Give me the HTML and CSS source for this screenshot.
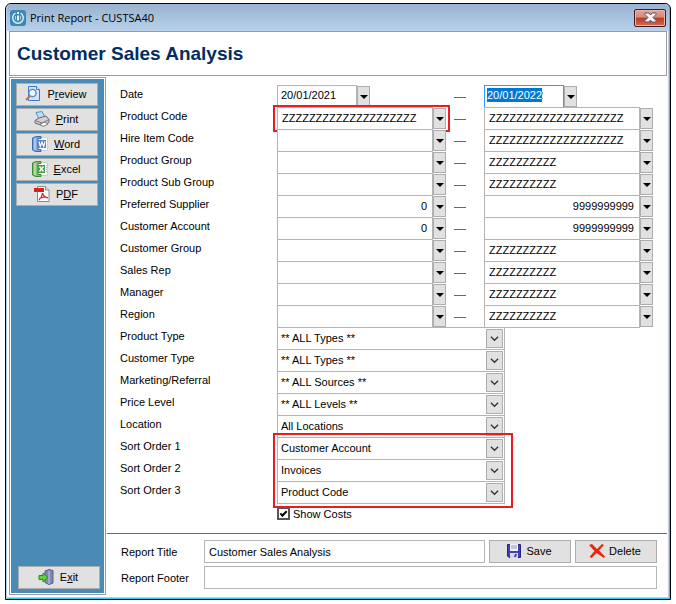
FILE: index.html
```
<!DOCTYPE html>
<html lang="en">
<head>
  <meta charset="UTF-8">
  <meta name="viewport" content="width=device-width, initial-scale=1.0">
  <title>Print Report - CUSTSA40</title>
  <link rel="stylesheet" href="styles.css">
</head>
<body>
  <div class="window">
    <header class="titlebar">
      <svg class="app-icon" viewBox="0 0 16 16">
        <rect width="16" height="16" rx="3" fill="#3f88b5"/>
        <path d="M5.500 3.200a5.300 5.300 0 1 0 5 0" fill="none" stroke="#d9ecf6" stroke-width="1.500"/>
        <path d="M8 2v2M8 5.500v5" fill="none" stroke="#fff" stroke-width="1.800"/>
        <path d="M5.500 6v3.500M10.500 6v3.500" fill="none" stroke="#a9cfe4" stroke-width="1"/>
      </svg>
      <span class="caption">Print Report - CUSTSA40</span>
      <button class="close" aria-label="Close">
        <svg viewBox="0 0 13 11" width="13" height="11">
          <path d="M1 1h4l1.500 2L8 1h4v1.500L9 5.500l3 3V10H8L6.500 8 5 10H1V8.500l3-3-3-3z" fill="#f4f4f6" stroke="#545c6c"/>
        </svg>
      </button>
    </header>

    <div class="heading"><h1>Customer Sales Analysis</h1></div>

    <div class="main">
      <div class="sidebar">
        <nav class="actions">
          <button class="btn">
            <svg viewBox="0 0 16 16">
              <path d="M3.500 .5h8l3 3v11h-11z" fill="#cfe3fb" stroke="#3f78cc"/>
              <path d="M11.500 .5v3h3" fill="#fff" stroke="#3f78cc"/>
              <circle cx="7.500" cy="7" r="3.600" fill="#eaf9ff" stroke="#5d83b5" stroke-width="1.300"/>
              <path d="M5 10L1 14" stroke="#b07a58" stroke-width="2.200"/>
            </svg>
            <span>P<u>r</u>eview</span>
          </button>
          <button class="btn">
            <svg viewBox="0 0 16 16">
              <path d="M2 1.500l6-1 3 6-6 2z" fill="#bfe0fa" stroke="#4f8fd0"/>
              <path d="M1 9.500l4-2.500 7-2 3 3.500v3l-7 3-7-2.500z" fill="#d2d2d6" stroke="#66666c"/>
              <path d="M1 9.500l7 2.500 7-3.500" fill="none" stroke="#77777d"/>
              <path d="M6 13l5-2 3 2-5 2.500z" fill="#fff" stroke="#77777d"/>
            </svg>
            <span><u>P</u>rint</span>
          </button>
          <button class="btn">
            <svg viewBox="0 0 16 16">
              <path d="M5 1.500h10.500v13H5z" fill="#fff" stroke="#c3d0e6"/>
              <path d="M.5 2Q2.500 .5 6 .5h3v2H6v11h3v2H4Q2 15 .5 14z" fill="#7fa6dd" stroke="#3c69ae"/>
              <path d="M3 2v12" stroke="#d3e3f8"/>
              <path d="M6 4h8v8H6z" fill="#5580c4"/>
              <path d="M7 5.500l1.300 5L10 6l1.700 4.500L13 5.500" fill="none" stroke="#fff" stroke-width="1.200"/>
            </svg>
            <span><u>W</u>ord</span>
          </button>
          <button class="btn">
            <svg viewBox="0 0 16 16">
              <path d="M5 1.500h10.500v13H5z" fill="#fff" stroke="#bcd9b8"/>
              <path d="M.5 2Q2.500 .5 6 .5h3v2H6v11h3v2H4Q2 15 .5 14z" fill="#86c06f" stroke="#3d8b3a"/>
              <path d="M3 2v12" stroke="#d9f0cf"/>
              <path d="M6 4h7v8H6z" fill="#4b9a47"/>
              <path d="M7.500 5.500l4 5M11.500 5.500l-4 5" stroke="#fff" stroke-width="1.500"/>
              <path d="M14.500 4v8" stroke="#8cc385" stroke-dasharray="1 1"/>
            </svg>
            <span><u>E</u>xcel</span>
          </button>
          <button class="btn">
            <svg viewBox="0 0 16 16">
              <path d="M3.500 .5h8l3.500 3.500v11.500H3.500z" fill="#fff" stroke="#8a8a8a"/>
              <path d="M11.500 .5v3.500H15" fill="#e6e6e6" stroke="#8a8a8a"/>
              <path d="M0 2h10v4H0z" fill="#d8201c"/>
              <path d="M5 14q3-3 3.500-7M8.500 7q1 4 5.500 5M5.500 12.500Q9 10.500 14 11.500" fill="none" stroke="#e02020" stroke-width="1.200"/>
            </svg>
            <span>P<u>D</u>F</span>
          </button>
        </nav>
        <div class="exit">
          <button class="btn">
            <svg viewBox="0 0 16 16">
              <path d="M7 2l4-1.500 4 1V14l-4 1.500-4-2z" fill="#8387b5" stroke="#5a5d8c"/>
              <path d="M11 1.500v13.500" stroke="#c4c7e4"/>
              <path d="M1 6.500h4V4l5 4.500-5 4.500v-2.500H1z" fill="#5fd43a" stroke="#258a14"/>
            </svg>
            <span>E<u>x</u>it</span>
          </button>
        </div>
      </div>

      <form class="content">
        <div class="criteria">
          <div class="row">
            <label for="date-from">Date</label>
            <div class="picker date"><input id="date-from" type="text" value="20/01/2021"><button type="button" aria-label="Choose"></button></div>
            <span class="dash"></span>
            <div class="picker date focused"><input type="text" value="20/01/2022" aria-label="Date to"><span class="selected">20/01/2022</span><button type="button" aria-label="Choose"></button></div>
          </div>
          <div class="row">
            <label for="code-from">Product Code</label>
            <div class="picker wide-pad marked"><input id="code-from" type="text" value="ZZZZZZZZZZZZZZZZZZZZ"><button type="button" aria-label="Choose"></button></div>
            <span class="dash"></span>
            <div class="picker wide-pad"><input type="text" value="ZZZZZZZZZZZZZZZZZZZZ" aria-label="Product Code to"><button type="button" aria-label="Choose"></button></div>
          </div>
          <div class="row">
            <label for="hire-from">Hire Item Code</label>
            <div class="picker"><input id="hire-from" type="text"><button type="button" aria-label="Choose"></button></div>
            <span class="dash"></span>
            <div class="picker wide-pad"><input type="text" value="ZZZZZZZZZZZZZZZZZZZZ" aria-label="Hire Item Code to"><button type="button" aria-label="Choose"></button></div>
          </div>
          <div class="row">
            <label for="group-from">Product Group</label>
            <div class="picker"><input id="group-from" type="text"><button type="button" aria-label="Choose"></button></div>
            <span class="dash"></span>
            <div class="picker wide-pad"><input type="text" value="ZZZZZZZZZZ" aria-label="Product Group to"><button type="button" aria-label="Choose"></button></div>
          </div>
          <div class="row">
            <label for="sub-from">Product Sub Group</label>
            <div class="picker"><input id="sub-from" type="text"><button type="button" aria-label="Choose"></button></div>
            <span class="dash"></span>
            <div class="picker wide-pad"><input type="text" value="ZZZZZZZZZZ" aria-label="Product Sub Group to"><button type="button" aria-label="Choose"></button></div>
          </div>
          <div class="row">
            <label for="supplier-from">Preferred Supplier</label>
            <div class="picker number"><input id="supplier-from" type="text" value="0"><button type="button" aria-label="Choose"></button></div>
            <span class="dash"></span>
            <div class="picker number"><input type="text" value="9999999999" aria-label="Preferred Supplier to"><button type="button" aria-label="Choose"></button></div>
          </div>
          <div class="row">
            <label for="account-from">Customer Account</label>
            <div class="picker number"><input id="account-from" type="text" value="0"><button type="button" aria-label="Choose"></button></div>
            <span class="dash"></span>
            <div class="picker number"><input type="text" value="9999999999" aria-label="Customer Account to"><button type="button" aria-label="Choose"></button></div>
          </div>
          <div class="row">
            <label for="custgroup-from">Customer Group</label>
            <div class="picker"><input id="custgroup-from" type="text"><button type="button" aria-label="Choose"></button></div>
            <span class="dash"></span>
            <div class="picker wide-pad"><input type="text" value="ZZZZZZZZZZ" aria-label="Customer Group to"><button type="button" aria-label="Choose"></button></div>
          </div>
          <div class="row">
            <label for="rep-from">Sales Rep</label>
            <div class="picker"><input id="rep-from" type="text"><button type="button" aria-label="Choose"></button></div>
            <span class="dash"></span>
            <div class="picker wide-pad"><input type="text" value="ZZZZZZZZZZ" aria-label="Sales Rep to"><button type="button" aria-label="Choose"></button></div>
          </div>
          <div class="row">
            <label for="manager-from">Manager</label>
            <div class="picker"><input id="manager-from" type="text"><button type="button" aria-label="Choose"></button></div>
            <span class="dash"></span>
            <div class="picker wide-pad"><input type="text" value="ZZZZZZZZZZ" aria-label="Manager to"><button type="button" aria-label="Choose"></button></div>
          </div>
          <div class="row">
            <label for="region-from">Region</label>
            <div class="picker"><input id="region-from" type="text"><button type="button" aria-label="Choose"></button></div>
            <span class="dash"></span>
            <div class="picker wide-pad"><input type="text" value="ZZZZZZZZZZ" aria-label="Region to"><button type="button" aria-label="Choose"></button></div>
          </div>

          <div class="row">
            <label for="product-type">Product Type</label>
            <div class="combo"><select id="product-type"><option>** ALL Types **</option></select><svg viewBox="0 0 10 6"><path d="M1 1l4 4 4-4"/></svg></div>
          </div>
          <div class="row">
            <label for="customer-type">Customer Type</label>
            <div class="combo"><select id="customer-type"><option>** ALL Types **</option></select><svg viewBox="0 0 10 6"><path d="M1 1l4 4 4-4"/></svg></div>
          </div>
          <div class="row">
            <label for="marketing">Marketing/Referral</label>
            <div class="combo"><select id="marketing"><option>** ALL Sources **</option></select><svg viewBox="0 0 10 6"><path d="M1 1l4 4 4-4"/></svg></div>
          </div>
          <div class="row">
            <label for="price-level">Price Level</label>
            <div class="combo"><select id="price-level"><option>** ALL Levels **</option></select><svg viewBox="0 0 10 6"><path d="M1 1l4 4 4-4"/></svg></div>
          </div>
          <div class="row">
            <label for="location">Location</label>
            <div class="combo"><select id="location"><option>All Locations</option></select><svg viewBox="0 0 10 6"><path d="M1 1l4 4 4-4"/></svg></div>
          </div>
          <div class="sorting">
            <div class="row">
              <label for="sort-1">Sort Order 1</label>
              <div class="combo"><select id="sort-1"><option>Customer Account</option></select><svg viewBox="0 0 10 6"><path d="M1 1l4 4 4-4"/></svg></div>
            </div>
            <div class="row">
              <label for="sort-2">Sort Order 2</label>
              <div class="combo"><select id="sort-2"><option>Invoices</option></select><svg viewBox="0 0 10 6"><path d="M1 1l4 4 4-4"/></svg></div>
            </div>
            <div class="row">
              <label for="sort-3">Sort Order 3</label>
              <div class="combo"><select id="sort-3"><option>Product Code</option></select><svg viewBox="0 0 10 6"><path d="M1 1l4 4 4-4"/></svg></div>
            </div>
          </div>
          <div class="check-row">
            <input type="checkbox" id="show-costs" checked>
            <label for="show-costs">Show Costs</label>
          </div>
        </div>

        <div class="report">
          <div class="report-row">
            <label for="report-title">Report Title</label>
            <input id="report-title" type="text" value="Customer Sales Analysis">
            <button type="button" class="btn">
              <svg viewBox="0 0 16 16">
                <path d="M1.500 1.500h13v13H3l-1.500-1.500z" fill="#3f3fae" stroke="#26267c"/>
                <path d="M4 1h8v7H4z" fill="#f2f2fa"/>
                <path d="M5 3h6M5 5h6" stroke="#9a9ab8"/>
                <path d="M4 10h8v5H4z" fill="#d5d5e2"/>
                <path d="M9 11h2l-1 3H8z" fill="#3f3fae"/>
              </svg>
              <span>Save</span>
            </button>
            <button type="button" class="btn">
              <svg viewBox="0 0 16 16">
                <path d="M0 2l3-1 5 5 5-5 2 1-5 5.500 6 6-1 1.500-7.500-5L2.500 15 .5 14 5.500 8z" fill="#e8260c"/>
              </svg>
              <span>Delete</span>
            </button>
          </div>
          <div class="report-row">
            <label for="report-footer">Report Footer</label>
            <input id="report-footer" type="text">
          </div>
        </div>
      </form>
    </div>
  </div>
</body>
</html>
```

FILE: styles.css
```
* {
  box-sizing: border-box;
}

body {
  margin: 0;
  padding: 3px 5px 4px;
  min-height: 100vh;
  display: flex;
  background: #fff;
  font-family: "Liberation Sans", Arial, sans-serif;
  font-size: 11px;
  color: #000;
}

input,
select,
button {
  font: inherit;
  color: inherit;
  margin: 0;
  border-radius: 0;
}

.window {
  flex: 1;
  display: flex;
  flex-direction: column;
  border: 1px solid #000;
  border-radius: 6px 6px 0 0;
  box-shadow: inset 1px 0 #b9d1ea, inset -1px -1px #35c5e6, inset -2px -2px #b9d1ea;
  padding: 0 3px 4px;
}

.titlebar {
  display: flex;
  align-items: center;
  height: 27px;
  margin: 0 -2px;
  padding: 0 3px;
  border-radius: 5px 5px 0 0;
  background: linear-gradient(#98b3d0, #b9d1ea);
}

.app-icon {
  width: 16px;
  height: 16px;
}

.caption {
  flex: 1;
  margin-left: 4px;
  font-family: "Open Sans", "Noto Sans", sans-serif;
  font-size: 11px;
}

.close {
  display: flex;
  align-items: center;
  justify-content: center;
  width: 32px;
  height: 18px;
  padding: 0;
  border: 1px solid #431a20;
  border-radius: 2px;
  background: linear-gradient(#e3a79b, #d88877 45%, #bb3a22 50%, #d26b54);
  box-shadow: inset 0 0 0 1px #e8b5aa;
}

.heading {
  border: 1px solid #9a9a9e;
  padding: 0 7px;
}

.heading h1 {
  margin: 0;
  font-size: 19px;
  line-height: 43px;
  color: #002d62;
}

.main {
  flex: 1;
  display: flex;
  gap: 1px;
  margin-top: 1px;
}

.sidebar {
  display: flex;
  flex-direction: column;
  justify-content: space-between;
  width: 97px;
  border: 1px solid #9a9a9e;
  box-shadow: inset 0 0 0 1px #fff;
  padding: 5px 6px;
  background: #4a8bb5;
}

.actions {
  display: flex;
  flex-direction: column;
  gap: 2px;
}

.exit {
  padding-left: 2px;
}

.btn {
  display: flex;
  align-items: center;
  justify-content: center;
  gap: 6px;
  width: 82px;
  height: 23px;
  padding: 0 2px 1px 0;
  border: 1px solid #adadad;
  background: #e1e1e1;
}

.btn svg {
  width: 16px;
  height: 16px;
}

.content {
  flex: 1;
  display: flex;
  flex-direction: column;
  justify-content: space-between;
}

.criteria {
  padding: 8px 13px 0;
}

.row {
  display: flex;
  height: 22px;
}

.row label {
  width: 157px;
  line-height: 19px;
}

.picker {
  position: relative;
  display: flex;
  align-items: flex-end;
  width: 169px;
  height: 23px;
}

.picker input,
.report-row input {
  flex: 1;
  min-width: 0;
  height: 23px;
  border: 1px solid #b4b4b4;
  padding: 0 3px 1px;
  background: #fff;
}

.picker button {
  display: flex;
  align-items: center;
  justify-content: center;
  width: 13px;
  height: 21px;
  margin-bottom: 1px;
  padding: 0;
  border: 1px solid #adadad;
  background: #e1e1e1;
}

.picker button::before {
  content: "";
  border: 4px solid transparent;
  border-top-color: #000;
  border-bottom: 0;
}

.wide-pad input {
  padding: 0 4px 1px;
}

.number input {
  padding: 0 5px 1px;
  text-align: right;
}

.date input {
  flex: none;
  width: 80px;
  padding-bottom: 3px;
}

.focused input {
  border-color: #3399ff;
}

.selected {
  position: absolute;
  left: 3px;
  top: 3px;
  line-height: 14px;
  color: #fff;
  background: #0078d7;
}

.marked::after {
  content: "";
  position: absolute;
  inset: -2px -4px;
  border: 2px solid #ed1c24;
  pointer-events: none;
}

.dash {
  width: 12px;
  height: 1px;
  margin: 12px 18px 0 8px;
  background: #666;
}

.combo {
  position: relative;
  width: 228px;
  height: 23px;
}

.combo select {
  display: block;
  width: 100%;
  height: 23px;
  appearance: none;
  border: 1px solid #b4b4b4;
  padding: 0 22px 1px 3px;
  background: #fff;
}

.combo svg {
  position: absolute;
  top: 2px;
  right: 2px;
  width: 17px;
  height: 19px;
  padding: 5px 3px;
  border: 1px solid #adadad;
  background: #e1e1e1;
  fill: none;
  stroke: #333;
  stroke-width: 1.4;
  pointer-events: none;
}

.sorting {
  position: relative;
}

.sorting::after {
  content: "";
  position: absolute;
  top: -4px;
  bottom: -5px;
  left: 153px;
  width: 236px;
  border: 2px solid #ed1c24;
  pointer-events: none;
}

.check-row {
  display: flex;
  align-items: center;
  gap: 3px;
  margin-top: 4px;
  padding-left: 157px;
}

.check-row input {
  display: grid;
  place-items: center;
  width: 13px;
  height: 13px;
  appearance: none;
  border: 2px solid #555;
  background: #fff;
}

.check-row input:checked::before {
  content: "";
  width: 5px;
  height: 2px;
  margin-bottom: 2px;
  border: solid #000;
  border-width: 0 0 2px 2px;
  transform: rotate(-45deg);
}

.report {
  display: flex;
  flex-direction: column;
  gap: 3px;
  padding: 6px 10px 6px 14px;
  border-top: 1px solid #666;
}

.report-row {
  display: flex;
  align-items: center;
}

.report-row label {
  width: 83px;
}

.report-row input {
  padding: 0 4px;
}

.report-row .btn {
  gap: 4px;
  margin-left: 4px;
}
```
